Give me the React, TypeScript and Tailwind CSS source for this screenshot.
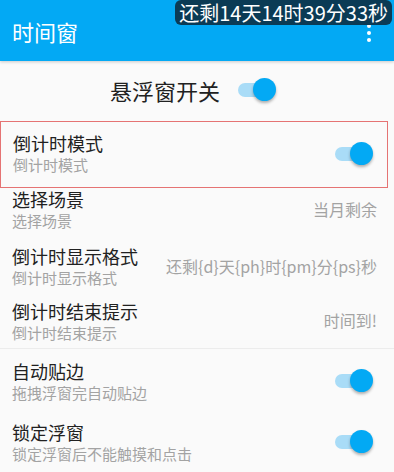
const font = { fontFamily: '"Noto Sans CJK SC", "Noto Sans", sans-serif' };

function Toggle() {
  return (
    <div className="relative w-[38px] h-[24px] shrink-0">
      <div className="absolute left-0 top-[5px] w-[30px] h-[14px] rounded-full bg-[#a9dcf7]" />
      <div className="absolute right-0 top-0 w-[23px] h-[23px] rounded-full bg-[#03a9f4] shadow-[0_2px_3px_rgba(0,0,0,0.3)]" />
    </div>
  );
}

function Row({
  title,
  sub,
  value,
  toggle,
  className = "",
}: {
  title: string;
  sub: string;
  value?: string;
  toggle?: boolean;
  className?: string;
}) {
  return (
    <div className={`flex items-center justify-between pl-3 ${className}`}>
      <div className="flex flex-col">
        <span className="text-[18px] leading-[22px] text-[#212121]">{title}</span>
        <span className="text-[15px] leading-[21px] text-[#a3a3a3]">{sub}</span>
      </div>
      {value && <span className="text-[16px] text-[#a3a3a3] pr-[17px] pb-[2px]">{value}</span>}
      {toggle && <div className="pr-[21px]"><Toggle /></div>}
    </div>
  );
}

export default function App() {
  return (
    <div className="w-[394px] h-[472px] bg-[#fafafa] overflow-hidden relative" style={font}>
      <header className="h-[61px] bg-[#03a9f4] flex items-center justify-between pl-3 pr-[23px] shadow-[0_1px_3px_rgba(0,0,0,0.2)] relative z-10">
        <span className="text-[22px] text-white pt-[2px]">时间窗</span>
        <div className="flex flex-col gap-[3px] pt-[4px]">
          <span className="w-[4px] h-[4px] rounded-full bg-white" />
          <span className="w-[4px] h-[4px] rounded-full bg-white" />
          <span className="w-[4px] h-[4px] rounded-full bg-white" />
        </div>
      </header>

      {/* floating countdown window over the toolbar */}
      <div className="absolute top-0 right-[2px] h-[25px] px-[4px] rounded-[6px] bg-[#0b3b55] flex items-center z-20">
        <span className="text-[20px] leading-[25px] text-white">还剩14天14时39分33秒</span>
      </div>

      <div className="h-[58px] flex items-center justify-center gap-[18px] pr-2">
        <span className="text-[22px] text-[#212121]">悬浮窗开关</span>
        <Toggle />
      </div>

      <div className="mt-[2px] mr-[6px] border border-[#e57373] h-[67px]">
        <Row title="倒计时模式" sub="倒计时模式" toggle className="h-full pb-[2px] [&>div:last-child]:pr-[14px]" />
      </div>

      <Row title="选择场景" sub="选择场景" value="当月剩余" className="h-[57px] pb-[14px]" />
      <Row title="倒计时显示格式" sub="倒计时显示格式" value="还剩{d}天{ph}时{pm}分{ps}秒" className="h-[55px] pb-[12px]" />
      <Row title="倒计时结束提示" sub="倒计时结束提示" value="时间到!" className="h-[49px] pb-[6px] border-b border-[#ececec]" />

      <Row title="自动贴边" sub="拖拽浮窗完自动贴边" toggle className="h-[56px] pt-[8px]" />
      <Row title="锁定浮窗" sub="锁定浮窗后不能触摸和点击" toggle className="h-[58px] pt-[16px]" />
    </div>
  );
}
